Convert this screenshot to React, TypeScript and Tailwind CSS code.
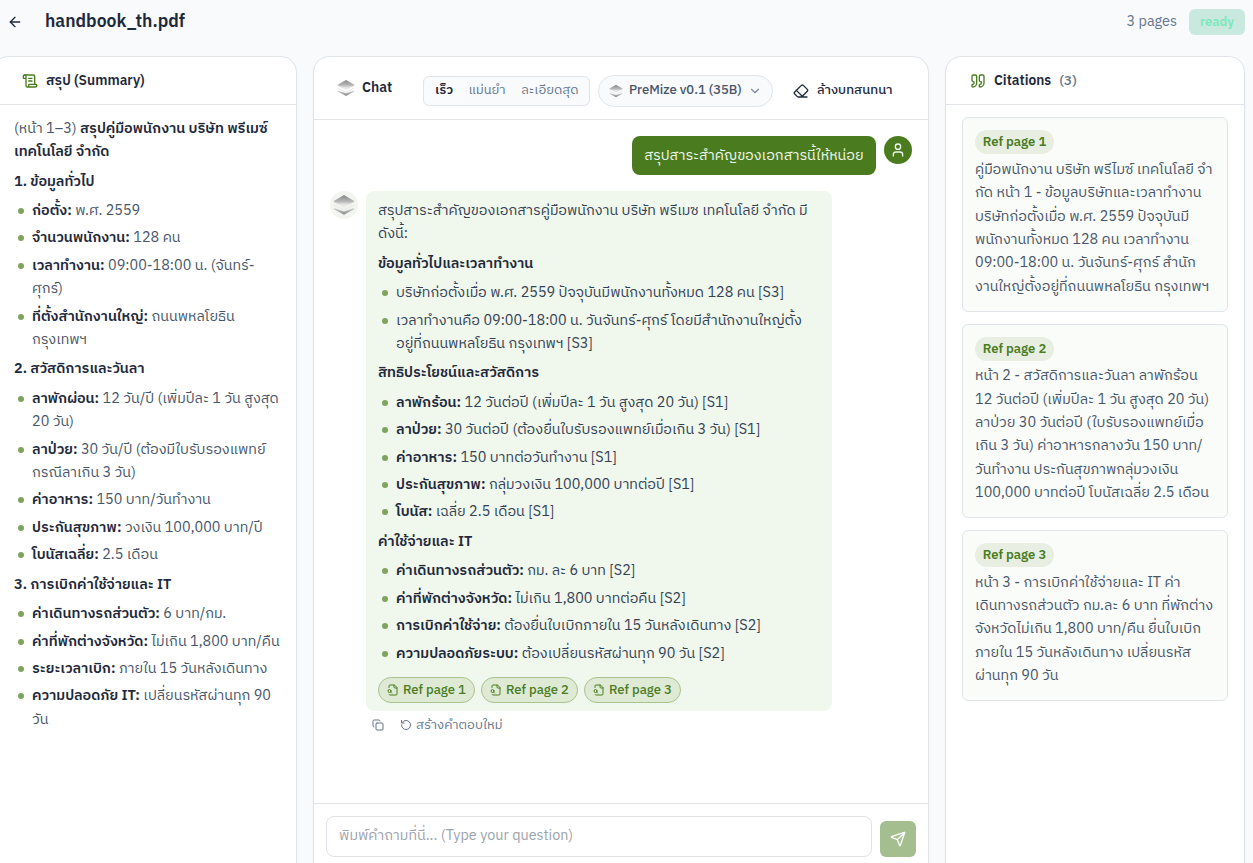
import { Fragment } from 'react'
import type { ReactNode } from 'react'
import {
  ArrowLeft, ChevronDown, Copy, Eraser, Quote, RotateCcw, ScrollText, Send, User,
} from 'lucide-react'

type Item = { label?: string; lines: string[] }
type Section = { title: string; items: Item[] }

const SUMMARY: Section[] = [
  {
    title: '1. ข้อมูลทั่วไป',
    items: [
      { label: 'ก่อตั้ง:', lines: ['พ.ศ. 2559'] },
      { label: 'จำนวนพนักงาน:', lines: ['128 คน'] },
      { label: 'เวลาทำงาน:', lines: ['09:00-18:00 น. (จันทร์-', 'ศุกร์)'] },
      { label: 'ที่ตั้งสำนักงานใหญ่:', lines: ['ถนนพหลโยธิน', 'กรุงเทพฯ'] },
    ],
  },
  {
    title: '2. สวัสดิการและวันลา',
    items: [
      { label: 'ลาพักผ่อน:', lines: ['12 วัน/ปี (เพิ่มปีละ 1 วัน สูงสุด', '20 วัน)'] },
      { label: 'ลาป่วย:', lines: ['30 วัน/ปี (ต้องมีใบรับรองแพทย์', 'กรณีลาเกิน 3 วัน)'] },
      { label: 'ค่าอาหาร:', lines: ['150 บาท/วันทำงาน'] },
      { label: 'ประกันสุขภาพ:', lines: ['วงเงิน 100,000 บาท/ปี'] },
      { label: 'โบนัสเฉลี่ย:', lines: ['2.5 เดือน'] },
    ],
  },
  {
    title: '3. การเบิกค่าใช้จ่ายและ IT',
    items: [
      { label: 'ค่าเดินทางรถส่วนตัว:', lines: ['6 บาท/กม.'] },
      { label: 'ค่าที่พักต่างจังหวัด:', lines: ['ไม่เกิน 1,800 บาท/คืน'] },
      { label: 'ระยะเวลาเบิก:', lines: ['ภายใน 15 วันหลังเดินทาง'] },
      { label: 'ความปลอดภัย IT:', lines: ['เปลี่ยนรหัสผ่านทุก 90', 'วัน'] },
    ],
  },
]

const ANSWER: Section[] = [
  {
    title: 'ข้อมูลทั่วไปและเวลาทำงาน',
    items: [
      { lines: ['บริษัทก่อตั้งเมื่อ พ.ศ. 2559 ปัจจุบันมีพนักงานทั้งหมด 128 คน [S3]'] },
      { lines: ['เวลาทำงานคือ 09:00-18:00 น. วันจันทร์-ศุกร์ โดยมีสำนักงานใหญ่ตั้ง', 'อยู่ที่ถนนพหลโยธิน กรุงเทพฯ [S3]'] },
    ],
  },
  {
    title: 'สิทธิประโยชน์และสวัสดิการ',
    items: [
      { label: 'ลาพักร้อน:', lines: ['12 วันต่อปี (เพิ่มปีละ 1 วัน สูงสุด 20 วัน) [S1]'] },
      { label: 'ลาป่วย:', lines: ['30 วันต่อปี (ต้องยื่นใบรับรองแพทย์เมื่อเกิน 3 วัน) [S1]'] },
      { label: 'ค่าอาหาร:', lines: ['150 บาทต่อวันทำงาน [S1]'] },
      { label: 'ประกันสุขภาพ:', lines: ['กลุ่มวงเงิน 100,000 บาทต่อปี [S1]'] },
      { label: 'โบนัส:', lines: ['เฉลี่ย 2.5 เดือน [S1]'] },
    ],
  },
  {
    title: 'ค่าใช้จ่ายและ IT',
    items: [
      { label: 'ค่าเดินทางรถส่วนตัว:', lines: ['กม. ละ 6 บาท [S2]'] },
      { label: 'ค่าที่พักต่างจังหวัด:', lines: ['ไม่เกิน 1,800 บาทต่อคืน [S2]'] },
      { label: 'การเบิกค่าใช้จ่าย:', lines: ['ต้องยื่นใบเบิกภายใน 15 วันหลังเดินทาง [S2]'] },
      { label: 'ความปลอดภัยระบบ:', lines: ['ต้องเปลี่ยนรหัสผ่านทุก 90 วัน [S2]'] },
    ],
  },
]

const CITATIONS = [
  {
    page: 1,
    lines: [
      'คู่มือพนักงาน บริษัท พรีไมซ์ เทคโนโลยี จำ',
      'กัด หน้า 1 - ข้อมูลบริษัทและเวลาทำงาน',
      'บริษัทก่อตั้งเมื่อ พ.ศ. 2559 ปัจจุบันมี',
      'พนักงานทั้งหมด 128 คน เวลาทำงาน',
      '09:00-18:00 น. วันจันทร์-ศุกร์ สำนัก',
      'งานใหญ่ตั้งอยู่ที่ถนนพหลโยธิน กรุงเทพฯ',
    ],
  },
  {
    page: 2,
    lines: [
      'หน้า 2 - สวัสดิการและวันลา ลาพักร้อน',
      '12 วันต่อปี (เพิ่มปีละ 1 วัน สูงสุด 20 วัน)',
      'ลาป่วย 30 วันต่อปี (ใบรับรองแพทย์เมื่อ',
      'เกิน 3 วัน) ค่าอาหารกลางวัน 150 บาท/',
      'วันทำงาน ประกันสุขภาพกลุ่มวงเงิน',
      '100,000 บาทต่อปี โบนัสเฉลี่ย 2.5 เดือน',
    ],
  },
  {
    page: 3,
    lines: [
      'หน้า 3 - การเบิกค่าใช้จ่ายและ IT ค่า',
      'เดินทางรถส่วนตัว กม.ละ 6 บาท ที่พักต่าง',
      'จังหวัดไม่เกิน 1,800 บาท/คืน ยื่นใบเบิก',
      'ภายใน 15 วันหลังเดินทาง เปลี่ยนรหัส',
      'ผ่านทุก 90 วัน',
    ],
  },
]

function Lines({ lines }: { lines: string[] }) {
  return (
    <>
      {lines.map((line, i) => (
        <Fragment key={line}>
          {i > 0 && <br />}
          {line}
        </Fragment>
      ))}
    </>
  )
}

function Logo({ className }: { className?: string }) {
  return (
    <svg viewBox="0 0 24 24" className={className}>
      <defs>
        <linearGradient id="logoTop" x1="0" y1="0" x2="0" y2="1">
          <stop offset="0" stopColor="#868686" />
          <stop offset="0.5" stopColor="#b4b4b4" />
          <stop offset="0.75" stopColor="#e2e2e2" />
          <stop offset="1" stopColor="#f0f0f0" />
        </linearGradient>
        <linearGradient id="logoBottom" x1="0" y1="0" x2="0" y2="1">
          <stop offset="0" stopColor="#d4d4d4" />
          <stop offset="1" stopColor="#868686" />
        </linearGradient>
      </defs>
      <path d="M12 1.2 23 7.6v1.2L12 14.6 1 8.8V7.6z" fill="url(#logoTop)" />
      <path d="M1 11.2 12 16.6l11-5.4v1.8L12 18.4 1 13z" fill="#ececec" />
      <path d="M1 15.4 12 19l11-3.6v1.2L12 22.6 1 16.6z" fill="url(#logoBottom)" />
    </svg>
  )
}

// page with a magnifier hanging over its left edge
function FileSearchIcon({ className }: { className?: string }) {
  return (
    <svg viewBox="0 0 24 24" fill="none" stroke="currentColor" strokeWidth={2} strokeLinecap="round" strokeLinejoin="round" className={className}>
      <path d="M14 2v4a2 2 0 0 0 2 2h4" />
      <path d="M4.268 21a2 2 0 0 0 1.727 1H18a2 2 0 0 0 2-2V7l-5-5H6a2 2 0 0 0-2 2v3" />
      <path d="m9 18-1.5-1.5" />
      <circle cx="5" cy="14" r="3" />
    </svg>
  )
}

function Sections({ sections }: { sections: Section[] }) {
  return (
    <>
      {sections.map(section => (
        <Fragment key={section.title}>
          <h4 className="font-semibold text-[#1e293b]">{section.title}</h4>
          <ul className="flex flex-col gap-1">
            {section.items.map(item => (
              <li key={item.lines[0]} className="flex">
                <span className="mt-2 mr-2 ml-1 size-1.5 shrink-0 rounded-full bg-[#7fa35f]" />
                <span>
                  {item.label && <strong className="font-semibold text-[#1e293b]">{item.label} </strong>}
                  <Lines lines={item.lines} />
                </span>
              </li>
            ))}
          </ul>
        </Fragment>
      ))}
    </>
  )
}

function Panel({ className, children }: { className: string; children: ReactNode }) {
  return (
    <section className={`flex h-[830px] shrink-0 flex-col rounded-2xl border border-[#e1e4e9] bg-white shadow-xs ${className}`}>
      {children}
    </section>
  )
}

export default function App() {
  return (
    <div className="h-[863px] w-[1253px] overflow-hidden whitespace-nowrap bg-[#f8fafc] font-['IBM_Plex_Sans_Thai','Noto_Sans','Noto_Sans_Thai',sans-serif] text-[14.4px] leading-[23.4px] text-[#1e293b]">
      {/* Top bar */}
      <header className="flex h-14 items-start pt-2">
        <ArrowLeft className="mt-1.5 ml-[7px] size-4" />
        <h1 className="mt-px ml-[22px] text-[17.6px] leading-[26px] font-semibold">handbook_th.pdf</h1>
        <span className="ml-auto leading-[29px] text-[#64748b]">3 pages</span>
        <span className="mt-px mr-2 ml-3 h-[26px] w-14 rounded-md bg-[#c9e9de] text-center text-[13px] leading-[26px] font-semibold text-[#7ce8bf]">ready</span>
      </header>

      <main className="flex">
        {/* Summary */}
        <Panel className="-ml-2 w-[305px]">
          <div className="flex h-12 items-center gap-2 border-b border-[#e1e4e9] pl-[29px] text-[13.8px] font-semibold">
            <ScrollText className="size-4 text-[#4a7c1f]" />
            <span className="pt-0.5">สรุป (Summary)</span>
          </div>
          <div className="flex flex-col gap-1.5 pt-[12.8px] pl-[21px] text-[#475569]">
            <p>
              (หน้า 1–3) <strong className="font-semibold text-[#1e293b]">สรุปคู่มือพนักงาน บริษัท พรีเมซ์<br />เทคโนโลยี จำกัด</strong>
            </p>
            <Sections sections={SUMMARY} />
          </div>
        </Panel>

        {/* Chat */}
        <Panel className="ml-4 w-[616px]">
          <div className="flex h-[63px] items-center border-b border-[#e1e4e9] pl-[23px]">
            <Logo className="size-[18px]" />
            <span className="ml-[7px] w-[61px] text-[14px] font-semibold">Chat</span>
            <div className="mt-[5px] flex h-[30px] w-[167px] items-center rounded-md border border-[#e1e4e9] bg-[#f8fafc] text-[13px] text-[#64748b]">
              <span className="ml-px flex h-[26px] w-[38px] items-center justify-center rounded bg-[#fafbfd] font-semibold text-[#1e293b]">เร็ว</span>
              <span className="w-12 text-center">แม่นยำ</span>
              <span className="flex-1 text-center">ละเอียดสุด</span>
            </div>
            <div className="mt-[5px] ml-2 flex h-8 w-[175px] items-center rounded-full border border-[#e1e4e9] bg-[#f8fafc] pl-2.5 text-[13px] font-medium text-[#475569]">
              <Logo className="size-3.5" />
              <span className="ml-1.5 flex-1">PreMize v0.1 (35B)</span>
              <ChevronDown className="mr-2.5 size-3.5 text-[#7c8797]" />
            </div>
            <Eraser className="mt-[5px] ml-5 size-4" />
            <span className="mt-1.5 ml-2 text-[13px] font-medium">ล้างบทสนทนา</span>
          </div>

          <div className="flex h-[684px] flex-col border-b border-[#e1e4e9] px-4 pt-4">
            <div className="flex justify-end gap-2">
              <div className="h-[39px] w-[244px] rounded-lg bg-[#4a7c1f] text-center leading-[41px] text-[#f1f8ec]">
                สรุปสาระสำคัญของเอกสารนี้ให้หน่อย
              </div>
              <span className="flex size-7 items-center justify-center rounded-full bg-[#4a7c1f] text-[#f1f8ec]">
                <User className="size-4" />
              </span>
            </div>
            <div className="mt-[14px] flex gap-2">
              <span className="mt-0.5 flex size-7 items-center justify-center rounded-full bg-[#f3f5f0]">
                <Logo className="size-[22px]" />
              </span>
              <div className="mt-0.5 h-[520px] w-[466px] rounded-lg bg-[#f0f7ec] px-3 pt-[9px]">
                <div className="flex flex-col gap-1.5 text-[#334155]">
                  <p>สรุปสาระสำคัญของเอกสารคู่มือพนักงาน บริษัท พรีเมซ เทคโนโลยี จำกัด มี<br />ดังนี้:</p>
                  <Sections sections={ANSWER} />
                </div>
                <div className="mt-[11px] flex gap-1.5">
                  {CITATIONS.map(({ page }) => (
                    <button key={page} className="flex h-[26px] w-[97px] items-center gap-1 rounded-full border border-[#a9c38f] bg-[#dfead5] pl-2 text-[13px] font-medium text-[#4a7c1f]">
                      <FileSearchIcon className="size-3" />
                      <span className="mt-px">Ref page {page}</span>
                    </button>
                  ))}
                </div>
              </div>
            </div>
            <div className="mt-0.5 flex items-center pl-[42px] text-[13px] text-[#64748b]">
              <Copy className="size-3" />
              <RotateCcw className="mr-1 ml-4 size-3" />
              <span className="pt-px">สร้างคำตอบใหม่</span>
            </div>
          </div>

          <div className="flex gap-2 px-3 pt-3">
            <div className="h-[41px] w-[546px] rounded-lg border border-[#dfe3e8] pl-3 leading-[38px] text-[#9ca3af]">
              พิมพ์คำถามที่นี่... (Type your question)
            </div>
            <button className="mt-[5px] flex size-9 items-center justify-center rounded-md bg-[#a5be8f] text-white">
              <Send className="size-4" />
            </button>
          </div>
        </Panel>

        {/* Citations */}
        <Panel className="ml-4 w-[300px]">
          <div className="flex h-12 items-center gap-2 border-b border-[#e1e4e9] pl-6 text-[13.8px] font-semibold">
            <Quote className="size-4 text-[#4a7c1f]" />
            <span className="pt-0.5">Citations</span>
            <span className="pt-0.5 font-medium text-[#64748b]">(3)</span>
          </div>
          <div className="flex flex-col gap-3 px-4 pt-[12.3px]">
            {CITATIONS.map(({ page, lines }) => (
              <article key={page} className="rounded-md border border-[#e1e4e9] bg-[#fafcf9] px-3 pt-3 pb-[11.5px] text-[#475569]">
                <span className="flex h-6 w-[79px] items-center justify-center rounded-full bg-[#e8efe2] text-[13px] font-semibold text-[#4a7c1f]">
                  <span className="pt-px">Ref page {page}</span>
                </span>
                <p className="mt-[4.5px]">
                  <Lines lines={lines} />
                </p>
              </article>
            ))}
          </div>
        </Panel>
      </main>
    </div>
  )
}
